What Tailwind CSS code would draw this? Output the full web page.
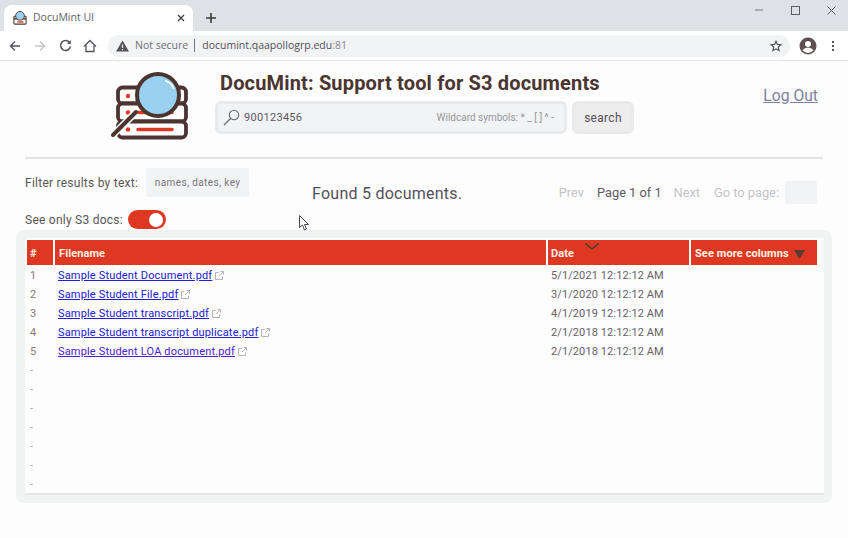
<!DOCTYPE html>
<html lang="en">
<head>
<meta charset="utf-8">
<title>DocuMint UI</title>
<script src="https://cdn.jsdelivr.net/npm/@tailwindcss/browser@4"></script>
</head>
<body class="w-[848px] h-[538px] overflow-hidden bg-[#fdfdfd] font-['Roboto',sans-serif] text-[#4a4040]">

<!-- browser chrome: tabs -->
<div class="h-[31px] bg-[#dee1e6] flex items-end relative">
    <div class="ml-[4px] w-[189px] h-[26px] bg-white rounded-t-[8px] flex items-center pl-[9px] pr-[8px]">
        <svg class="w-[14px] h-[14px]" viewBox="0 0 16 16" fill="none">
            <rect x="1" y="6" width="14" height="3" rx="1" stroke="#4b3530" stroke-width="1.2"/>
            <rect x="1" y="9" width="14" height="6" rx="1" fill="#fff" stroke="#4b3530" stroke-width="1.2"/>
            <circle cx="8" cy="5.500" r="5" fill="#9ad0f0" stroke="#4b3530" stroke-width="1"/>
            <path d="M5 12.500h7" stroke="#df3822" stroke-width="1.600"/>
        </svg>
        <span class="ml-[6px] text-[10.5px] text-[#5f6368] font-['Open_Sans',sans-serif]">DocuMint UI</span>
        <svg class="ml-auto w-[8px] h-[8px]" viewBox="0 0 8 8"><path d="M1 1l6 6M7 1L1 7" stroke="#45403f" stroke-width="1.4"/></svg>
    </div>
    <svg class="ml-[13px] mb-[8px] w-[10px] h-[10px]" viewBox="0 0 10 10"><path d="M5 0v10M0 5h10" stroke="#3c3a3a" stroke-width="1.6"/></svg>
    <div class="absolute top-0 right-0 h-[20px] flex items-center">
        <svg class="w-[8px] h-[8px] mr-[28px]" viewBox="0 0 8 8"><path d="M0 4h8" stroke="#77757d" stroke-width="1"/></svg>
        <svg class="w-[9px] h-[9px] mr-[27px]" viewBox="0 0 9 9"><rect x=".5" y=".5" width="8" height="8" fill="none" stroke="#5d5a68" stroke-width="1"/></svg>
        <svg class="w-[9px] h-[9px] mr-[12px]" viewBox="0 0 9 9"><path d="M.5.5l8 8M8.5.5l-8 8" stroke="#5d5a68" stroke-width="1"/></svg>
    </div>
</div>

<!-- browser chrome: address bar -->
<div class="h-[30px] bg-white border-b border-[#e3e3ea] flex items-center">
    <svg class="ml-[9px] w-[12px] h-[12px]" viewBox="0 0 12 12" fill="none"><path d="M11 6H1.5M6 1.5L1.5 6 6 10.500" stroke="#54525a" stroke-width="1.4"/></svg>
    <svg class="ml-[13px] w-[12px] h-[12px]" viewBox="0 0 12 12" fill="none"><path d="M1 6h9.500M6 1.500L10.500 6 6 10.500" stroke="#c4c5c9" stroke-width="1.400"/></svg>
    <svg class="ml-[13px] w-[13px] h-[13px]" viewBox="0 0 13 13" fill="none"><path d="M11 4A5 5 0 1 0 11.500 7.500" stroke="#54525a" stroke-width="1.500"/><path d="M11.800 1v4h-4z" fill="#54525a"/></svg>
    <svg class="ml-[11px] w-[14px] h-[14px]" viewBox="0 0 14 14" fill="none"><path d="M1 7.500L7 1.500l6 6M3 6.500V12.500h8V6.500" stroke="#54525a" stroke-width="1.300"/></svg>
    <div class="ml-[11px] w-[682px] h-[22px] rounded-full bg-[#f1f3f4] flex items-center pl-[8px] pr-[8px]">
        <svg class="w-[13px] h-[12px]" viewBox="0 0 13 12"><path d="M6.500 0.500L13 11.500H0z" fill="#55525a"/><path d="M6.500 4.500v3.500M6.500 9v1.200" stroke="#f1f3f4" stroke-width="1.200"/></svg>
        <span class="ml-[6px] text-[10.5px] text-[#6f7079] font-['Open_Sans',sans-serif]">Not secure</span>
        <span class="ml-[6px] w-px h-[13px] bg-[#77757d]"></span>
        <span class="ml-[7px] text-[10.5px] text-[#54505a] font-['Open_Sans',sans-serif]">documint.qaapollogrp.edu<span class="text-[#85858c]">:81</span></span>
        <svg class="ml-auto w-[12px] h-[12px]" viewBox="0 0 24 24" fill="none"><path d="M12 2.500l2.900 6.300 6.800.8-5 4.700 1.300 6.800-6-3.400-6 3.400 1.300-6.800-5-4.700 6.800-.8z" stroke="#54505a" stroke-width="2.400"/></svg>
    </div>
    <svg class="ml-[9px] w-[18px] h-[18px]" viewBox="0 0 18 18"><circle cx="9" cy="9" r="8.500" fill="#5d4f50"/><circle cx="9" cy="7" r="3" fill="#fff"/><path d="M3.500 13.300c1.500-2 3.500-2.600 5.500-2.600s4 .6 5.500 2.600a7 7 0 0 1-11 0z" fill="#fff"/></svg>
    <div class="ml-[15px] flex flex-col gap-[2px]">
        <span class="w-[2px] h-[2px] bg-[#54505a]"></span>
        <span class="w-[2px] h-[2px] bg-[#54505a]"></span>
        <span class="w-[2px] h-[2px] bg-[#54505a]"></span>
    </div>
</div>

<!-- app header -->
<div class="h-[98px] mx-[25px] border-b-2 border-[#e2e2ea] flex relative">
    <svg class="ml-[85px] mt-[10px] w-[80px] h-[70px] shrink-0" viewBox="0 0 80 70" fill="none">
        <rect x="8" y="16.500" width="68" height="16" rx="4.500" fill="#fff" stroke="#4b3530" stroke-width="3.800"/>
        <rect x="8" y="32.500" width="68" height="18" rx="4.500" fill="#fff" stroke="#4b3530" stroke-width="3.800"/>
        <rect x="8" y="50.500" width="68" height="16" rx="4.500" fill="#fff" stroke="#4b3530" stroke-width="3.800"/>
        <circle cx="18" cy="25" r="2.200" fill="#df3822"/>
        <circle cx="18" cy="41.500" r="2.200" fill="#df3822"/>
        <circle cx="18" cy="58.500" r="2.200" fill="#df3822"/>
        <path d="M28 41.500h34M28 58.500h34" stroke="#df3822" stroke-width="3.600" stroke-linecap="round"/>
        <path d="M26 41L3 64" stroke="#fff" stroke-width="7"/>
        <path d="M26 41L3 64" stroke="#4b3530" stroke-width="4" stroke-linecap="round"/>
        <circle cx="48" cy="24" r="21" fill="#9ad0f0" stroke="#4b3530" stroke-width="4"/>
        <path d="M56 10c3 1 6 3.500 7.500 7" stroke="#fff" stroke-width="1.800" stroke-linecap="round"/>
    </svg>
    <div class="ml-[25px] mt-[10px]">
        <h1 class="ml-[5px] text-[20px] leading-[24px] tracking-[0.16px] font-bold text-[#4b3530]">DocuMint: Support tool for S3 documents</h1>
        <div class="mt-[6px] flex gap-[5px]">
            <div class="w-[352px] h-[33px] bg-[#f2f3f4] border-[3px] border-[#e9eaec] rounded-[6px] flex items-center pl-[5px] pr-[10px]">
                <svg class="w-[17px] h-[17px]" viewBox="0 0 17 17" fill="none"><circle cx="11" cy="6" r="4.700" stroke="#6a6872" stroke-width="1.100"/><path d="M7.500 9.500L1 16" stroke="#6a6872" stroke-width="1.300"/></svg>
                <span class="ml-[4px] mt-[2px] text-[11px] tracking-[0.3px] text-[#5c5a68]">900123456</span>
                <span class="ml-auto text-[10px] text-[#97979c]">Wildcard symbols: * _ [ ] ^ -</span>
            </div>
            <button class="w-[62px] h-[33px] bg-[#eeeded] border-[3px] border-[#e9eaec] rounded-[6px] text-[12px] tracking-[0.3px] text-[#55505a]">search</button>
        </div>
    </div>
    <a class="absolute right-[5px] top-[24px] text-[15.7px] leading-[22px] underline text-[#8080a0]" href="#">Log Out</a>
</div>

<!-- controls -->
<div class="relative h-[71px] mx-[25px] text-[#5a5658]">
    <div class="flex items-center pt-[9px]">
        <span class="text-[12px] tracking-[0.25px]">Filter results by text:</span>
        <div class="ml-[8px] w-[103px] h-[29px] bg-[#f2f3f4] rounded-[3px] flex items-center justify-center text-[10px] tracking-[0.4px] text-[#77767e]">names, dates, key</div>
    </div>
    <div class="flex items-center mt-[13px]">
        <span class="text-[12px] tracking-[0.25px]">See only S3 docs:</span>
        <div class="ml-[5px] w-[38px] h-[19px] bg-[#df3822] rounded-full flex items-center justify-end pr-[3px]"><span class="w-[14px] h-[14px] rounded-full bg-white"></span></div>
    </div>
    <p class="absolute left-[287px] top-[24px] text-[16px] leading-[22px] tracking-[0.25px] text-[#55505a]">Found 5 documents.</p>
    <div class="absolute top-[22px] right-[6px] flex items-center text-[12.8px]">
        <span class="text-[#c4c4c8]">Prev</span>
        <span class="ml-[13px] text-[#5f5a64]">Page 1 of 1</span>
        <span class="ml-[12px] text-[#c4c4c8]">Next</span>
        <span class="ml-[14px] text-[#c4c4c8]">Go to page:</span>
        <div class="ml-[6px] w-[32px] h-[23px] rounded-[3px] bg-[#f2f3f4]"></div>
    </div>
</div>

<!-- results table -->
<div class="mx-[16px] w-[816px] h-[273px] bg-[#f1f2f2] rounded-[8px] pt-[8px] pl-[9px] pr-[8px] pb-[8px]">
    <div class="h-full bg-[#fdfdfd] rounded-[2px] border-b-2 border-[#e6e6e4] pt-[2px] pl-[2px] text-[11px] tracking-[0.1px] text-[#66626a]">
        <div class="flex h-[25px] gap-[2px] text-[11px] font-bold text-[#fff3e4]">
            <div class="w-[26px] bg-[#df3822] flex items-center pl-[3px] pt-[4px]">#</div>
            <div class="w-[491px] bg-[#df3822] flex items-center pl-[4px] pt-[4px]">Filename</div>
            <div class="w-[141px] bg-[#df3822] flex items-center pl-[3px] pt-[4px] relative">Date
                <svg class="absolute left-[37px] top-[3px] w-[14px] h-[7px]" viewBox="0 0 14 7" fill="none"><path d="M.5.5L7 6 13.500.5" stroke="#4a3a36" stroke-width="1.300"/></svg>
            </div>
            <div class="w-[126px] bg-[#df3822] flex items-center pl-[4px] pt-[4px]">See more columns
                <svg class="ml-[5px] w-[11px] h-[9px]" viewBox="0 0 11 9"><path d="M0 0h11L5.500 9z" fill="#5a3a34"/></svg>
            </div>
        </div>
        <div class="grid grid-cols-[28px_493px_1fr] auto-rows-[19px] items-center mt-[2px]">
            <span class="pl-[3px] text-[#8a7a70]">1</span>
            <span class="pl-[3px] flex items-center gap-[3px] tracking-[0.17px]"><a class="underline text-[#2020d8]" href="#">Sample Student Document.pdf</a><svg class="w-[9px] h-[9px] mb-[3px]" viewBox="0 0 9 9" fill="none" stroke="#b4b4b8"><path d="M3.500 1.500H.5v7h7v-3M4 5L8.500.5M5.500.5h3v3"/></svg></span>
            <span class="pl-[3px]">5/1/2021 12:12:12 AM</span>
            <span class="pl-[3px] text-[#8a7a70]">2</span>
            <span class="pl-[3px] flex items-center gap-[3px] tracking-[0.17px]"><a class="underline text-[#2020d8]" href="#">Sample Student File.pdf</a><svg class="w-[9px] h-[9px] mb-[3px]" viewBox="0 0 9 9" fill="none" stroke="#b4b4b8"><path d="M3.500 1.500H.5v7h7v-3M4 5L8.500.5M5.500.5h3v3"/></svg></span>
            <span class="pl-[3px]">3/1/2020 12:12:12 AM</span>
            <span class="pl-[3px] text-[#8a7a70]">3</span>
            <span class="pl-[3px] flex items-center gap-[3px] tracking-[0.17px]"><a class="underline text-[#2020d8]" href="#">Sample Student transcript.pdf</a><svg class="w-[9px] h-[9px] mb-[3px]" viewBox="0 0 9 9" fill="none" stroke="#b4b4b8"><path d="M3.500 1.500H.5v7h7v-3M4 5L8.500.5M5.500.5h3v3"/></svg></span>
            <span class="pl-[3px]">4/1/2019 12:12:12 AM</span>
            <span class="pl-[3px] text-[#8a7a70]">4</span>
            <span class="pl-[3px] flex items-center gap-[3px] tracking-[0.17px]"><a class="underline text-[#2020d8]" href="#">Sample Student transcript duplicate.pdf</a><svg class="w-[9px] h-[9px] mb-[3px]" viewBox="0 0 9 9" fill="none" stroke="#b4b4b8"><path d="M3.500 1.500H.5v7h7v-3M4 5L8.500.5M5.500.5h3v3"/></svg></span>
            <span class="pl-[3px]">2/1/2018 12:12:12 AM</span>
            <span class="pl-[3px] text-[#8a7a70]">5</span>
            <span class="pl-[3px] flex items-center gap-[3px] tracking-[0.17px]"><a class="underline text-[#4a20d8]" href="#">Sample Student LOA document.pdf</a><svg class="w-[9px] h-[9px] mb-[3px]" viewBox="0 0 9 9" fill="none" stroke="#b4b4b8"><path d="M3.500 1.500H.5v7h7v-3M4 5L8.500.5M5.500.5h3v3"/></svg></span>
            <span class="pl-[3px]">2/1/2018 12:12:12 AM</span>
            <span class="col-span-3 pl-[3px] text-[#a8a8a8]">-</span>
            <span class="col-span-3 pl-[3px] text-[#a8a8a8]">-</span>
            <span class="col-span-3 pl-[3px] text-[#a8a8a8]">-</span>
            <span class="col-span-3 pl-[3px] text-[#a8a8a8]">-</span>
            <span class="col-span-3 pl-[3px] text-[#a8a8a8]">-</span>
            <span class="col-span-3 pl-[3px] text-[#a8a8a8]">-</span>
            <span class="col-span-3 pl-[3px] text-[#a8a8a8]">-</span>
        </div>
    </div>
</div>

<!-- mouse pointer from the capture -->
<svg class="absolute left-[299px] top-[215px] w-[10px] h-[16px]" viewBox="0 0 10 16" fill="#fff" stroke="#4a4a55"><path d="M.5.5v12l3-2.500 2 5 2-1-2-4.500h4z"/></svg>

</body>
</html>
